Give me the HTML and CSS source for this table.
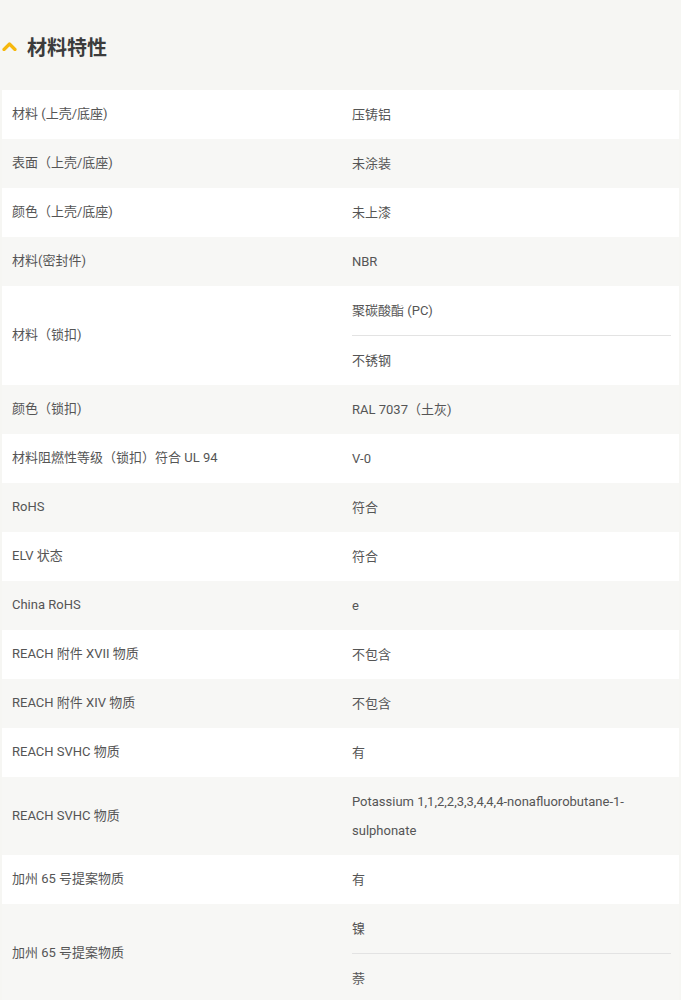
FILE: index.html
```html
<!DOCTYPE html>
<html lang="zh">
<head>
<meta charset="utf-8">
<link rel="stylesheet" href="styles.css">
</head>
<body>
<div class="section">
  <div class="head">
    <svg class="chev" width="15" height="10" viewBox="0 0 15 10"><path d="M2 8.5 L7.5 3 L13 8.5" fill="none" stroke="#f6b80e" stroke-width="3.2" stroke-linecap="round" stroke-linejoin="round"/></svg>
    <h2 class="title">材料特性</h2>
  </div>
  <div class="table">
    <div class="row"><div class="lbl">材料 (上壳/底座)</div><div class="val"><div class="v">压铸铝</div></div></div>
    <div class="row alt"><div class="lbl">表面（上壳/底座)</div><div class="val"><div class="v">未涂装</div></div></div>
    <div class="row"><div class="lbl">颜色（上壳/底座)</div><div class="val"><div class="v">未上漆</div></div></div>
    <div class="row alt"><div class="lbl">材料(密封件)</div><div class="val"><div class="v">NBR</div></div></div>
    <div class="row"><div class="lbl">材料（锁扣)</div><div class="val"><div class="v">聚碳酸酯 (PC)</div><div class="v">不锈钢</div></div></div>
    <div class="row alt"><div class="lbl">颜色（锁扣)</div><div class="val"><div class="v">RAL 7037（土灰)</div></div></div>
    <div class="row"><div class="lbl">材料阻燃性等级（锁扣）符合 UL 94</div><div class="val"><div class="v">V-0</div></div></div>
    <div class="row alt"><div class="lbl">RoHS</div><div class="val"><div class="v">符合</div></div></div>
    <div class="row"><div class="lbl">ELV 状态</div><div class="val"><div class="v">符合</div></div></div>
    <div class="row alt"><div class="lbl">China RoHS</div><div class="val"><div class="v">e</div></div></div>
    <div class="row"><div class="lbl">REACH 附件 XVII 物质</div><div class="val"><div class="v">不包含</div></div></div>
    <div class="row alt"><div class="lbl">REACH 附件 XIV 物质</div><div class="val"><div class="v">不包含</div></div></div>
    <div class="row"><div class="lbl">REACH SVHC 物质</div><div class="val"><div class="v">有</div></div></div>
    <div class="row alt"><div class="lbl">REACH SVHC 物质</div><div class="val"><div class="v">Potassium 1,1,2,2,3,3,4,4,4-nonafluorobutane-1-sulphonate</div></div></div>
    <div class="row"><div class="lbl">加州 65 号提案物质</div><div class="val"><div class="v">有</div></div></div>
    <div class="row alt"><div class="lbl">加州 65 号提案物质</div><div class="val"><div class="v">镍</div><div class="v">萘</div></div></div>
  </div>
</div>
</body>
</html>
```
FILE: styles.css
```css
html, body {
  margin: 0;
  padding: 0;
  background: #f6f6f3;
}
body {
  font-family: Roboto, "Noto Sans CJK SC", sans-serif;
  color: #555;
  font-size: 13px;
}
.head {
  height: 90px;
  display: flex;
  align-items: center;
  padding: 3px 0 0 2px;
  box-sizing: border-box;
}
.chev {
  display: block;
  margin-top: -2px;
}
.title {
  margin: 0 0 0 10px;
  font-size: 20px;
  font-weight: bold;
  color: #3c3c3c;
  font-family: "Noto Sans CJK SC", sans-serif;
  line-height: 1;
}
.table {
  margin: 0 2px;
}
.row {
  display: flex;
  background: #fff;
}
.row.alt {
  background: #f7f7f5;
}
.lbl {
  width: 340px;
  flex: none;
  padding: 9px 0 11px 10px;
  line-height: 29px;
  display: flex;
  align-items: center;
}
.val {
  flex: 1;
  padding-right: 8px;
  min-width: 0;
}
.v {
  padding: 10px 0;
  line-height: 29px;
}
.v + .v {
  border-top: 1px solid #e3e3e3;
}
```
